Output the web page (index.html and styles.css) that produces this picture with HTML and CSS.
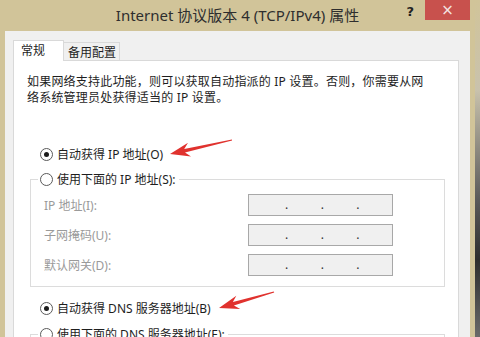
FILE: index.html
```html
<!DOCTYPE html>
<html lang="zh-CN">
<head>
    <meta charset="UTF-8">
    <title>Internet 协议版本 4 (TCP/IPv4) 属性</title>
    <link rel="stylesheet" href="styles.css">
</head>
<body>
    <div class="desktop">
        <div class="window">
            <div class="titlebar">
                <div></div>
                <div class="title">Internet 协议版本 4 (TCP/IPv4) 属性</div>
                <div class="controls">
                    <span class="help">?</span>
                    <span class="close">×</span>
                </div>
            </div>

            <div class="client">
                <div class="tabs">
                    <div class="tab active">常规</div>
                    <div class="tab">备用配置</div>
                </div>

                <div class="panel">
                    <p class="intro">如果网络支持此功能，则可以获取自动指派的 IP 设置。否则，你需要从网<br>络系统管理员处获得适当的 IP 设置。</p>

                    <div class="option auto-ip"><span class="radio checked"></span>自动获得 IP 地址(O)</div>

                    <fieldset class="group">
                        <legend><div class="option"><span class="radio"></span>使用下面的 IP 地址(S):</div></legend>
                        <div class="rows">
                            <div class="row">
                                <span class="label">IP 地址(I):</span>
                                <div class="ip"><span class="dot">.</span><span class="dot">.</span><span class="dot">.</span></div>
                            </div>
                            <div class="row">
                                <span class="label">子网掩码(U):</span>
                                <div class="ip"><span class="dot">.</span><span class="dot">.</span><span class="dot">.</span></div>
                            </div>
                            <div class="row">
                                <span class="label">默认网关(D):</span>
                                <div class="ip"><span class="dot">.</span><span class="dot">.</span><span class="dot">.</span></div>
                            </div>
                        </div>
                    </fieldset>

                    <div class="option auto-dns"><span class="radio checked"></span>自动获得 DNS 服务器地址(B)</div>

                    <fieldset class="group dns">
                        <legend><div class="option"><span class="radio"></span>使用下面的 DNS 服务器地址(E):</div></legend>
                    </fieldset>
                </div>
            </div>
        </div>
        <div class="backdrop"></div>
    </div>

    <!-- red annotation arrows -->
    <svg class="marks" width="480" height="337" viewBox="0 0 480 337">
        <polygon points="170,154 191,156.4 185,152.4 232.1,140.6 231.9,139.4 184.2,148.9 188,142.8" fill="#e0322e"/>
        <polygon points="219,308 240.2,309.1 233.9,305.5 274.2,292.6 273.8,291.4 232.9,302.1 236.3,295.7" fill="#e0322e"/>
    </svg>
</body>
</html>
```

FILE: styles.css
```css
body {
    margin: 0;
    width: 480px;
    height: 337px;
    overflow: hidden;
    position: relative;
    font-family: "Noto Sans", "Noto Sans CJK SC", sans-serif;
    font-size: 12px;
    color: #1e1e1e;
    background-color: #d1c499;
}

.desktop {
    display: flex;
    height: 337px;
}

.window {
    width: 465px;
    padding: 0 5px;
    background-color: #d1c499;
}

.backdrop {
    flex: 1;
    background: linear-gradient(#d1c499 0, #c9c2ad 90px, #5a5a5a 200px, #2e2e2e 260px, #6a6a6a 337px);
}

.titlebar {
    display: grid;
    grid-template-columns: 1fr auto 1fr;
    height: 31px;
}

.title {
    font-size: 15px;
    line-height: 30px;
    color: #2e2e2e;
    white-space: nowrap;
}

.controls {
    display: flex;
    justify-content: flex-end;
    align-items: flex-start;
}

.help {
    font-family: "DejaVu Sans", sans-serif;
    font-weight: bold;
    font-size: 13px;
    line-height: 24px;
    color: #222;
    margin-right: 11px;
}

.close {
    width: 45px;
    height: 20px;
    background-color: #c8514d;
    color: #f4e4e2;
    font-family: "DejaVu Sans", sans-serif;
    font-size: 15px;
    line-height: 20px;
    text-align: center;
}

.client {
    height: 306px;
    overflow: hidden;
    background-color: #f0f0f0;
    padding: 9px 11px 0 8px;
    box-sizing: border-box;
}

.tabs {
    display: flex;
    align-items: flex-end;
    height: 20px;
}

.tab {
    box-sizing: border-box;
    border: 1px solid #d9d9d9;
    border-bottom: none;
    white-space: nowrap;
}

.tab.active {
    width: 51px;
    height: 21px;
    margin-bottom: -1px;
    padding-left: 7px;
    line-height: 20px;
    background-color: white;
    position: relative;
    z-index: 1;
}

.tab:not(.active) {
    width: 56px;
    height: 18px;
    padding-left: 4px;
    line-height: 20px;
    border-left: none;
    background-color: #f0f0f0;
}

.panel {
    height: 400px;
    background-color: white;
    border: 1px solid #d9d9d9;
    padding: 13px 13px 0 13px;
}

.intro {
    margin: 0;
    line-height: 16px;
    white-space: nowrap;
    letter-spacing: 0.2px;
}

.option {
    display: flex;
    align-items: center;
    height: 20px;
    margin-left: 13px;
    white-space: nowrap;
}

.auto-ip {
    margin-top: 38px;
}

.auto-dns {
    margin-top: 11px;
}

.radio {
    width: 13px;
    height: 13px;
    box-sizing: border-box;
    border: 1px solid #5a5a5a;
    border-radius: 50%;
    background-color: white;
    margin-right: 4px;
    display: flex;
    align-items: center;
    justify-content: center;
}

.radio.checked::after {
    content: "";
    width: 5px;
    height: 5px;
    border-radius: 50%;
    background-color: #1b1b1b;
}

.group {
    margin: 5px 0 0 3px;
    padding: 0;
    border: 1px solid #dcdcdc;
    min-width: 0;
}

.group.dns {
    margin-top: 6px;
    height: 60px;
}

.group legend {
    padding: 0 3px 0 2px;
    margin-left: 7px;
}

.group legend .option {
    margin-left: 0;
}

.rows {
    display: flex;
    flex-direction: column;
    gap: 8px;
    padding: 5px 0 10px 13px;
}

.row {
    display: flex;
    align-items: center;
    height: 22px;
}

.label {
    width: 204px;
    color: #9a9a9a;
    white-space: nowrap;
}

.ip {
    display: flex;
    width: 145px;
    height: 22px;
    box-sizing: border-box;
    border: 1px solid #a8a8a8;
    background-color: #f0f0f0;
    padding-left: 36px;
    line-height: 20px;
    color: #333;
}

.dot {
    width: 36px;
}

.marks {
    position: absolute;
    left: 0;
    top: 0;
    pointer-events: none;
}
```
